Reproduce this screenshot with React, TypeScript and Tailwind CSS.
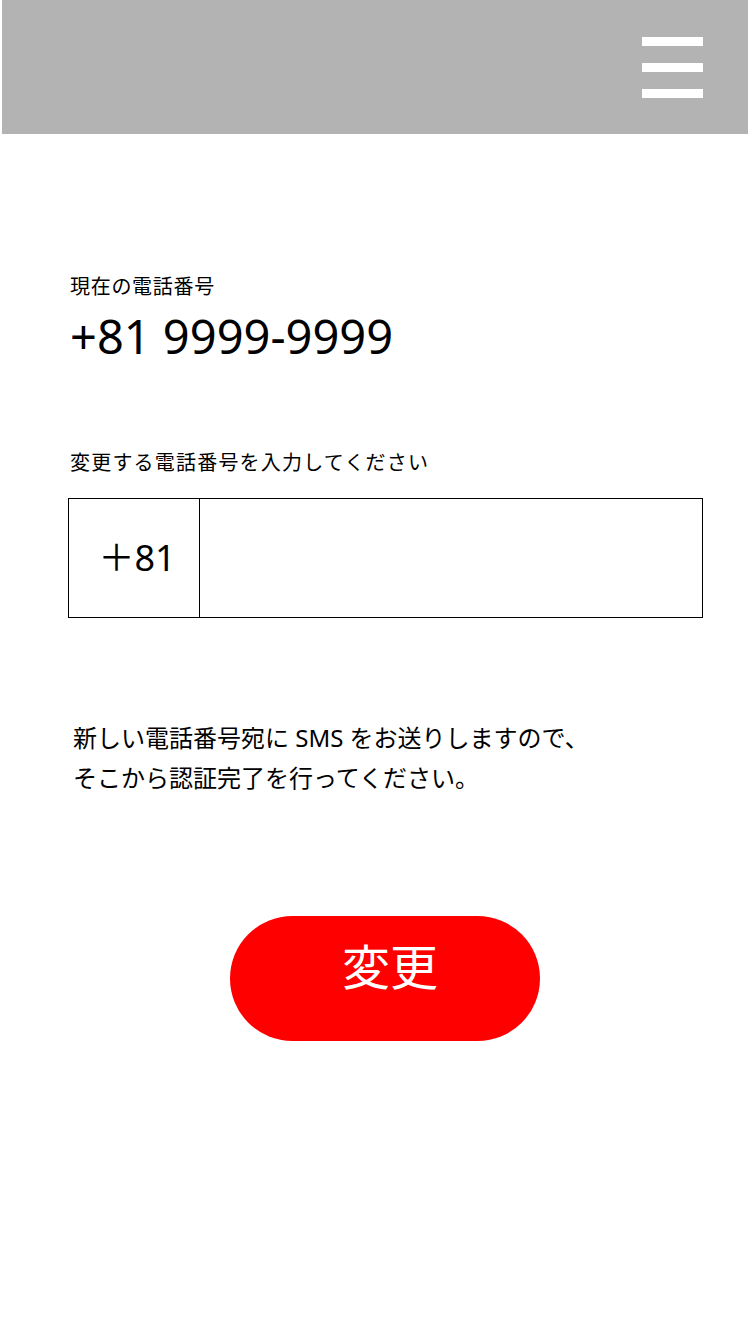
import React from "react";

const font = { fontFamily: '"Noto Sans", "Noto Sans CJK JP", sans-serif' };

export default function App() {
  return (
    <div className="min-h-[1334px] bg-white text-black" style={font}>
      <header className="mx-[2px] flex h-[134px] items-start justify-end bg-[#b3b3b3] pr-[45px] pt-[37px]">
        <button className="flex w-[61px] flex-col gap-[17px]" aria-label="menu">
          <span className="block h-[9px] w-full bg-white" />
          <span className="block h-[9px] w-full bg-white" />
          <span className="block h-[9px] w-full bg-white" />
        </button>
      </header>

      <main className="px-[68px]">
        <div className="mt-[138px] pl-[2px]">
          <p className="text-[20px] leading-[30px] tracking-[0.7px]">現在の電話番号</p>
          <p className="mt-[6px] text-[47px] leading-[56px]">+81 9999-9999</p>
        </div>

        <p className="mt-[84px] pl-[2px] text-[20px] leading-[30px] tracking-[1.2px]">
          変更する電話番号を入力してください
        </p>

        <div className="mt-[20px] flex h-[120px] w-[635px] border border-black">
          <div className="flex w-[131px] items-center justify-center border-r border-black pl-[6px] text-[36px]">
            ＋81
          </div>
          <input className="flex-1 px-4 text-[32px] outline-none" type="tel" />
        </div>

        <p className="mt-[100px] pl-[5px] text-[24px] leading-[40px]">
          新しい電話番号宛に SMS をお送りしますので、
          <br />
          そこから認証完了を行ってください。
        </p>

        <div className="mt-[118px] flex justify-center">
          <button className="ml-[20px] h-[125px] w-[310px] rounded-full bg-[#ff0000] pb-[24px] pl-[10px] text-[48px] text-white">
            変更
          </button>
        </div>
      </main>
    </div>
  );
}
